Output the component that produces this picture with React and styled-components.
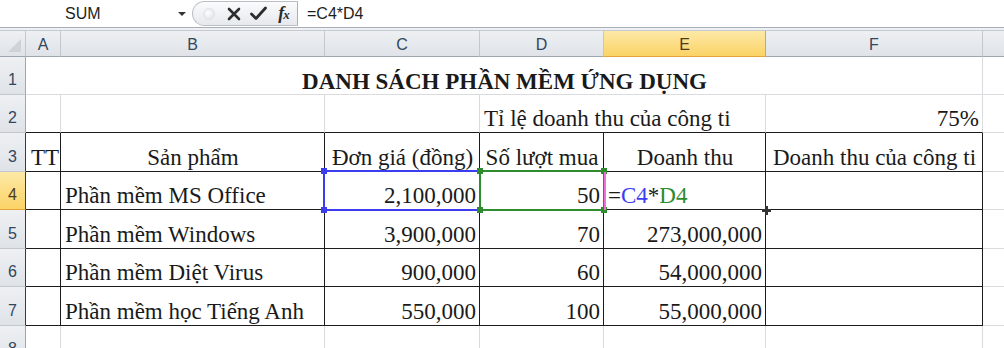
import React from "react";
import styled, { createGlobalStyle, css } from "styled-components";

const GlobalStyle = createGlobalStyle`
  html, body {
    margin: 0;
    padding: 0;
    background: #ffffff;
    overflow: hidden;
  }
  * {
    box-sizing: border-box;
  }
`;

const grid = "#d9dbdf";
const ink = "#1a1a1a";

const Window = styled.div`
  width: 1004px;
  height: 348px;
  overflow: hidden;
  background: #fff;
  font-family: "Liberation Sans", Arial, sans-serif;
`;

const FormulaBar = styled.div`
  display: flex;
  height: 27px;
  background: #fff;
`;

const NameBox = styled.div`
  position: relative;
  width: 192px;
  display: flex;
  align-items: center;
  padding-left: 65px;
  font-size: 16px;
  color: #1e1e1e;
`;

const DropArrow = styled.span`
  position: absolute;
  right: 6px;
  top: 12px;
  width: 0;
  height: 0;
  border-left: 4px solid transparent;
  border-right: 4px solid transparent;
  border-top: 4px solid #333;
`;

const FxControls = styled.div`
  width: 106px;
  margin-top: 1px;
  height: 25px;
  display: flex;
  align-items: center;
  padding-left: 3px;
  border: 1px solid #b9bfc7;
  border-right: 1px solid #a9b0b9;
  border-radius: 13px 0 0 13px;
  background: linear-gradient(#fbfbfc, #e6e9ed);
`;

const Slot = styled.span`
  width: 25px;
  display: flex;
  justify-content: center;
  align-items: center;
`;

const Dot = styled.span`
  width: 12px;
  height: 12px;
  border-radius: 50%;
  background: radial-gradient(circle at 40% 40%, #ffffff, #d9dde2);
  border: 1px solid #dfe2e6;
`;

const FxText = styled.span`
  font-family: "Liberation Serif", "Times New Roman", serif;
  font-style: italic;
  font-weight: bold;
  font-size: 18px;
  color: #2b2b2b;
  letter-spacing: -1px;
  small {
    font-size: 13px;
  }
`;

const FormulaInput = styled.div`
  flex: 1;
  display: flex;
  align-items: center;
  padding-left: 9px;
  font-size: 16px;
  color: #1e1e1e;
`;

const Divider = styled.div`
  height: 4px;
  border-top: 1px solid #a9afb7;
  border-bottom: 1px solid #c5cad1;
  background: #eef0f3;
`;

const Sheet = styled.div`
  position: relative;
  display: grid;
  grid-template-columns: 26px 35px 264px 155px 124px 162px 217px 40px;
  grid-template-rows: 26px 38px 38px 39px 38px 39px 38px 39px 38px;
`;

const headerBase = css`
  display: flex;
  justify-content: center;
  font-family: "Liberation Sans", Arial, sans-serif;
  font-size: 16px;
  color: #34465c;
  border-right: 1px solid #c3c8cf;
  border-bottom: 1px solid #9ea6b0;
  background: linear-gradient(#eef0f3, #dfe3e8);
  ${(p) =>
    p.$active &&
    css`
      background: linear-gradient(#fde9a6, #fbd366);
      border-right: 1px solid #e3a43c;
      border-bottom: 1px solid #e3a43c;
      color: #4a3a20;
    `}
`;

const Corner = styled.div`
  ${headerBase};
  position: relative;
  &::after {
    content: "";
    position: absolute;
    right: 4px;
    bottom: 4px;
    width: 0;
    height: 0;
    border-left: 13px solid transparent;
    border-bottom: 13px solid #cfd3d9;
  }
`;

const ColHeader = styled.div`
  ${headerBase};
  align-items: center;
  padding-top: 2px;
`;

const RowHeader = styled.div`
  ${headerBase};
  align-items: center;
  padding-top: 9px;
  border-bottom: 1px solid #c3c8cf;
  border-right: 1px solid ${(p) => (p.$edge ? "#3a3a3a" : "#9ea6b0")};
  ${(p) =>
    p.$active &&
    css`
      border-bottom: 1px solid #e3a43c;
    `}
`;

const Cell = styled.div`
  display: flex;
  align-items: flex-end;
  justify-content: ${(p) =>
    p.$align === "right" ? "flex-end" : p.$align === "center" ? "center" : "flex-start"};
  padding: 0 3px 1px 4px;
  font-family: "Liberation Serif", "Times New Roman", serif;
  font-size: 23px;
  line-height: 24px;
  color: ${ink};
  white-space: nowrap;
  overflow: visible;
  border-right: 1px solid ${(p) => (p.$boxR ? "#1c1c1c" : grid)};
  border-bottom: 1px solid ${(p) => (p.$boxB ? "#1c1c1c" : grid)};
  ${(p) => p.$span && css`grid-column: span ${p.$span};`}
  ${(p) => p.$bold && css`font-weight: bold;`}
  ${(p) => p.$title && css`padding-bottom: 0;`}
`;

const Ref = styled.span`
  color: ${(p) => p.$color};
`;

const Selection = styled.div`
  position: absolute;
  left: ${(p) => p.$left}px;
  top: ${(p) => p.$top}px;
  width: ${(p) => p.$width}px;
  height: ${(p) => p.$height}px;
  border: 2px solid ${(p) => p.$color};
  pointer-events: none;
`;

const Handle = styled.span`
  position: absolute;
  width: 6px;
  height: 6px;
  background: ${(p) => p.$color};
  ${(p) => (p.$v === "top" ? "top: -4px;" : "bottom: -4px;")}
  ${(p) => (p.$h === "left" ? "left: -4px;" : "right: -4px;")}
`;

const EditBar = styled.div`
  position: absolute;
  left: 604px;
  top: 141px;
  width: 2px;
  height: 38px;
  background: #f06fd8;
`;

const FillCross = styled.div`
  position: absolute;
  left: 762px;
  top: 175px;
  width: 9px;
  height: 9px;
  &::before,
  &::after {
    content: "";
    position: absolute;
    background: #333;
  }
  &::before {
    left: 3px;
    top: 0;
    width: 3px;
    height: 9px;
  }
  &::after {
    left: 0;
    top: 3px;
    width: 9px;
    height: 3px;
  }
`;

const XIcon = () => (
  <svg width="14" height="14" viewBox="0 0 14 14">
    <path d="M2 2 L12 12 M12 2 L2 12" stroke="#2d2d2d" strokeWidth="2.6" strokeLinecap="round" />
  </svg>
);

const CheckIcon = () => (
  <svg width="17" height="15" viewBox="0 0 17 15">
    <path d="M1.5 8 L6 12.5 L15.5 2" stroke="#2d2d2d" strokeWidth="2.8" fill="none" strokeLinejoin="round" strokeLinecap="round" />
  </svg>
);

const Box = ({ left, top, width, height, color }) => (
  <Selection $left={left} $top={top} $width={width} $height={height} $color={color}>
    <Handle $color={color} $v="top" $h="left" />
    <Handle $color={color} $v="top" $h="right" />
    <Handle $color={color} $v="bottom" $h="left" />
    <Handle $color={color} $v="bottom" $h="right" />
  </Selection>
);

const columns = ["A", "B", "C", "D", "E", "F", ""];

const products = [
  { name: "Phần mềm MS Office", price: "2,100,000", qty: "50", revenue: null },
  { name: "Phần mềm Windows", price: "3,900,000", qty: "70", revenue: "273,000,000" },
  { name: "Phần mềm Diệt Virus", price: "900,000", qty: "60", revenue: "54,000,000" },
  { name: "Phần mềm học Tiếng Anh", price: "550,000", qty: "100", revenue: "55,000,000" },
];

const headings = ["TT", "Sản phẩm", "Đơn giá (đồng)", "Số lượt mua", "Doanh thu", "Doanh thu của công ti"];

export default function App() {
  return (
    <Window>
      <GlobalStyle />
      <FormulaBar>
        <NameBox>
          SUM
          <DropArrow />
        </NameBox>
        <FxControls>
          <Slot>
            <Dot />
          </Slot>
          <Slot>
            <XIcon />
          </Slot>
          <Slot>
            <CheckIcon />
          </Slot>
          <Slot>
            <FxText>
              f<small>x</small>
            </FxText>
          </Slot>
        </FxControls>
        <FormulaInput>=C4*D4</FormulaInput>
      </FormulaBar>
      <Divider />
      <Sheet>
        <Corner />
        {columns.map((c) => (
          <ColHeader key={c || "g"} $active={c === "E"}>
            {c}
          </ColHeader>
        ))}

        <RowHeader>1</RowHeader>
        <Cell $span={6} $align="center" $bold $title>
          DANH SÁCH PHẦN MỀM ỨNG DỤNG
        </Cell>
        <Cell />

        <RowHeader>2</RowHeader>
        <Cell $boxB />
        <Cell $boxB />
        <Cell $boxB />
        <Cell $span={2} $boxB>
          Tỉ lệ doanh thu của công ti
        </Cell>
        <Cell $boxB $align="right">
          75%
        </Cell>
        <Cell />

        <RowHeader $edge>3</RowHeader>
        {headings.map((h, i) => (
          <Cell key={h} $boxR $boxB $align={i === 0 ? "left" : "center"} style={i === 0 ? { paddingLeft: 5 } : undefined}>
            {h}
          </Cell>
        ))}
        <Cell />

        {products.map((p, i) => (
          <React.Fragment key={p.name}>
            <RowHeader $edge $active={i === 0}>
              {i + 4}
            </RowHeader>
            <Cell $boxR $boxB />
            <Cell $boxR $boxB>
              {p.name}
            </Cell>
            <Cell $boxR $boxB $align="right">
              {p.price}
            </Cell>
            <Cell $boxR $boxB $align="right">
              {p.qty}
            </Cell>
            <Cell $boxR $boxB $align={p.revenue ? "right" : "left"}>
              {p.revenue || (
                <>
                  =<Ref $color="#3c3cf0">C4</Ref>*<Ref $color="#2e8b2e">D4</Ref>
                </>
              )}
            </Cell>
            <Cell $boxR $boxB />
            <Cell />
          </React.Fragment>
        ))}

        <RowHeader>8</RowHeader>
        {columns.map((c) => (
          <Cell key={"r8" + c} />
        ))}

        <Box left={323} top={139} width={158} height={41} color="#3c3cf0" />
        <Box left={479} top={139} width={126} height={41} color="#2e8b2e" />
        <EditBar />
        <FillCross />
      </Sheet>
    </Window>
  );
}
